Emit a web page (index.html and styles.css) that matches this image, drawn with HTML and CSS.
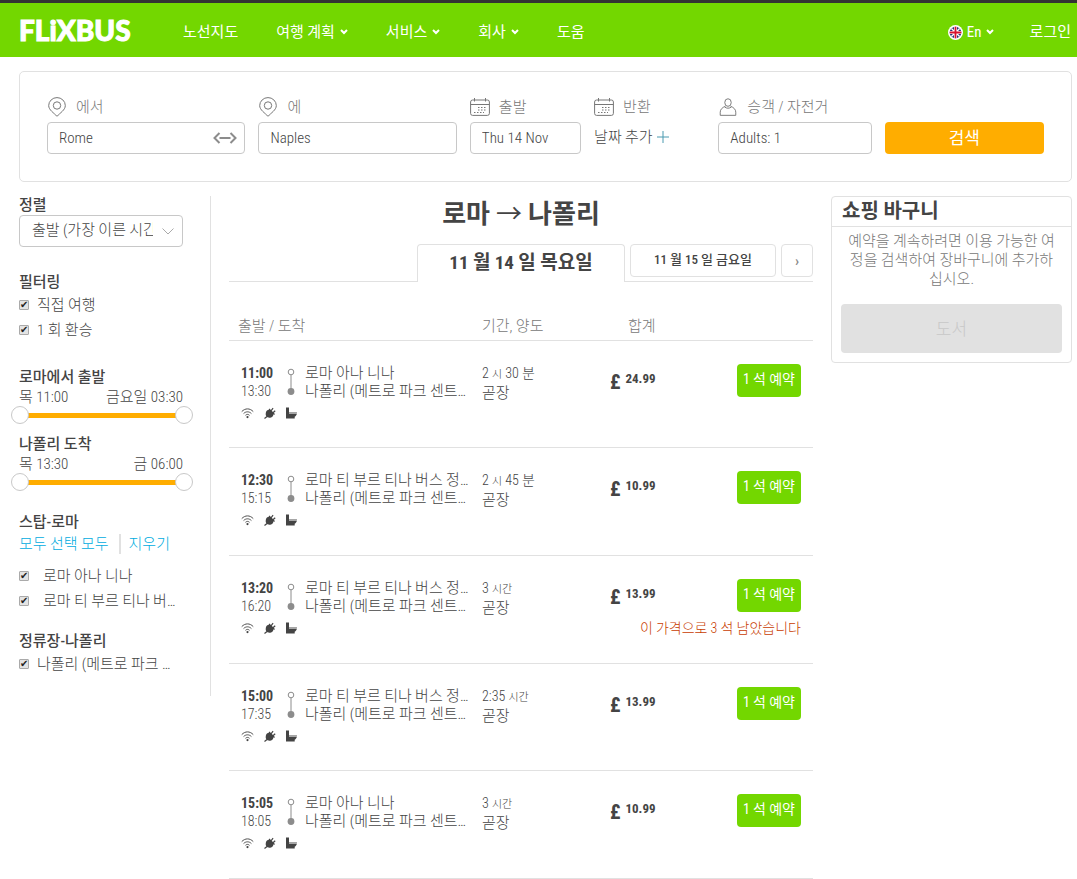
FILE: index.html
```html
<!DOCTYPE html>
<html lang="ko">
<head>
<meta charset="utf-8">
<meta name="viewport" content="width=device-width, initial-scale=1">
<title>FLiXBUS</title>
<link rel="stylesheet" href="styles.css">
</head>
<body>
<svg class="sprite" aria-hidden="true">
  <symbol id="pin" viewBox="0 0 18 20"><path d="M9 19.3C6 16 .7 13 .7 8.6a8.3 8 0 0 1 16.6 0C17.300 13 12 16 9 19.300z"/><circle cx="9" cy="8.500" r="3.700"/></symbol>
  <symbol id="calendar" viewBox="0 0 20 18"><rect x=".6" y="2" width="18.800" height="15.400" rx="2"/><path d="M.6 6.500h18.800M4.500 0v3.500M15.500 0v3.500"/><path d="M8 9.500h9M8 12h9M4 14.500h10" stroke-dasharray="1.500 1.500"/></symbol>
  <symbol id="person" viewBox="0 0 18 19"><ellipse cx="9" cy="4.800" rx="3.400" ry="4"/><path d="M6.300 8.700C3 10 .8 12 .8 15v3.300h16.400V15c0-3-2.200-5-5.500-6.300M5.500 9.500c1.800 1.700 5.200 1.700 7 0"/></symbol>
  <symbol id="caret" viewBox="0 0 8 6"><path d="M1 1l3 3 3-3"/></symbol>
  <symbol id="route" viewBox="0 0 8 28"><path d="M4 7v14" stroke="#8c8c8c"/><circle cx="4" cy="4" r="2.800" fill="#fff" stroke="#8c8c8c"/><circle cx="4" cy="23.500" r="3.400" fill="#8c8c8c"/></symbol>
  <symbol id="wifi" viewBox="0 0 14 12"><path d="M.8 4.500C4.500.6 9.500.6 13.200 4.500M2.800 6.600c2.500-2.500 5.900-2.500 8.400 0M4.800 8.500c1.400-1.300 3-1.300 4.400 0" fill="none" stroke="#444"/><circle cx="7" cy="10.400" r="1.200" fill="#444"/></symbol>
  <symbol id="plug" viewBox="0 0 12 12"><path d="M2.500 5C3 3.500 5 2.500 6.500 3L10 6.500c.3 1.500-1 3.500-2.500 4-2 .5-3.800 0-4.600-1S2 6.500 2.500 5z" fill="#444"/><path d="M5.500 2l5.500 5.500M7.500 3.800L9.600 1.200M9.500 5.800l2.200-2M3.500 9.500L1 11.500" stroke="#444" stroke-width="1.200" fill="none"/></symbol>
  <symbol id="toilet" viewBox="0 0 12 12"><path d="M.5.5h3v5h8c0 2.500-1.300 3.700-2.300 4.200v1.800H.5z" fill="#444"/><path d="M3.500 6.400h8" stroke="#fff" stroke-width=".6"/></symbol>
</svg>

<header class="topbar">
  <a class="logo" href="#">FLiXBUS</a>
  <nav class="nav">
    <a href="#">노선지도</a>
    <a href="#">여행 계획 <svg class="caret"><use href="#caret"/></svg></a>
    <a href="#">서비스 <svg class="caret"><use href="#caret"/></svg></a>
    <a href="#">회사 <svg class="caret"><use href="#caret"/></svg></a>
    <a href="#">도움</a>
  </nav>
  <a class="lang" href="#">
    <svg class="flag" viewBox="0 0 15 15"><circle cx="7.500" cy="7.500" r="7.500" fill="#fff"/><circle cx="7.500" cy="7.500" r="5.800" fill="#29337a"/><path d="M3.400 3.400l8.200 8.200M11.600 3.400l-8.200 8.200" stroke="#fff" stroke-width="1.400"/><path d="M7.500 1.700v11.600M1.700 7.500h11.600" stroke="#fff" stroke-width="3"/><path d="M7.500 1.700v11.600M1.700 7.500h11.600" stroke="#d8102d" stroke-width="1.800"/></svg>
    En <svg class="caret"><use href="#caret"/></svg>
  </a>
  <a class="login" href="#">로그인</a>
</header>

<form class="search">
  <div class="field">
    <label for="from"><svg class="ico pin"><use href="#pin"/></svg>에서</label>
    <div class="box">
      <input id="from" type="text" value="Rome">
      <button class="swap" type="button" aria-label="Swap"><svg viewBox="0 0 24 12"><path d="M6.500 1L1.500 6l5 5M17.500 1l5 5-5 5M6.500 6h11"/></svg></button>
    </div>
  </div>
  <div class="field">
    <label for="to"><svg class="ico pin"><use href="#pin"/></svg>에</label>
    <input id="to" type="text" value="Naples">
  </div>
  <div class="field">
    <label for="depart"><svg class="ico"><use href="#calendar"/></svg>출발</label>
    <input id="depart" type="text" value="Thu 14 Nov">
  </div>
  <div class="field">
    <label for="return"><svg class="ico"><use href="#calendar"/></svg>반환</label>
    <button class="add-date" id="return" type="button">날짜 추가<svg viewBox="0 0 12 12"><path d="M6 0v12M0 6h12"/></svg></button>
  </div>
  <div class="field">
    <label for="pax"><svg class="ico person"><use href="#person"/></svg>승객 / 자전거</label>
    <input id="pax" type="text" value="Adults: 1">
  </div>
  <button class="go" type="submit">검색</button>
</form>

<div class="page">
  <aside class="filters">
    <section>
      <h2><label for="sort">정렬</label></h2>
      <div class="box">
        <select id="sort"><option>출발 (가장 이른 시간)</option></select>
        <svg class="chev" viewBox="0 0 12 7"><path d="M.5.5L6 6l5.500-5.500"/></svg>
      </div>
    </section>
    <section>
      <h2>필터링</h2>
      <label class="check"><input type="checkbox" checked>직접 여행</label>
      <label class="check"><input type="checkbox" checked>1 회 환승</label>
    </section>
    <section>
      <h2>로마에서 출발</h2>
      <div class="ends"><span>목 11:00</span><span>금요일 03:30</span></div>
      <div class="slider"><input type="range" value="0" aria-label="출발 시작"><input type="range" value="100" aria-label="출발 끝"></div>
    </section>
    <section class="near">
      <h2>나폴리 도착</h2>
      <div class="ends"><span>목 13:30</span><span>금 06:00</span></div>
      <div class="slider"><input type="range" value="0" aria-label="도착 시작"><input type="range" value="100" aria-label="도착 끝"></div>
    </section>
    <section>
      <h2>스탑-로마</h2>
      <div class="links"><a href="#">모두 선택 모두</a><a href="#">지우기</a></div>
      <label class="check stop"><input type="checkbox" checked>로마 아나 니나</label>
      <label class="check stop"><input type="checkbox" checked>로마 티 부르 티나 버…</label>
    </section>
    <section class="last">
      <h2>정류장-나폴리</h2>
      <label class="check"><input type="checkbox" checked>나폴리 (메트로 파크 …</label>
    </section>
  </aside>

  <main>
    <h1>로마 <span class="arrow">→</span> 나폴리</h1>
    <div class="tabs">
      <div class="rule"></div>
      <button class="tab active" type="button">11 월 14 일 목요일</button>
      <div class="rule">
        <button class="tab" type="button">11 월 15 일 금요일</button>
        <button class="tab next" type="button" aria-label="Next">›</button>
      </div>
    </div>
    <table class="trips">
      <thead><tr><th class="c-trip">출발 / 도착</th><th class="c-time">기간, 양도</th><th class="c-fare">합계</th></tr></thead>
      <tbody>
        <tr>
          <td><div class="trip"><div class="hours"><b>11:00</b><span>13:30</span></div><svg class="route"><use href="#route"/></svg><div class="stops"><span>로마 아나 니나</span><span>나폴리 (메트로 파크 센트…</span></div></div>
            <div class="perks"><svg><use href="#wifi"/></svg><svg><use href="#plug"/></svg><svg><use href="#toilet"/></svg></div></td>
          <td><div class="time">2 <small>시</small> 30 분</div><div class="direct">곧장</div></td>
          <td><div class="fare"><span class="price"><b class="cur">£</b> <b>24.99</b></span><button type="button">1 석 예약</button></div></td>
        </tr>
        <tr>
          <td><div class="trip"><div class="hours"><b>12:30</b><span>15:15</span></div><svg class="route"><use href="#route"/></svg><div class="stops"><span>로마 티 부르 티나 버스 정…</span><span>나폴리 (메트로 파크 센트…</span></div></div>
            <div class="perks"><svg><use href="#wifi"/></svg><svg><use href="#plug"/></svg><svg><use href="#toilet"/></svg></div></td>
          <td><div class="time">2 <small>시</small> 45 분</div><div class="direct">곧장</div></td>
          <td><div class="fare"><span class="price"><b class="cur">£</b> <b>10.99</b></span><button type="button">1 석 예약</button></div></td>
        </tr>
        <tr>
          <td><div class="trip"><div class="hours"><b>13:20</b><span>16:20</span></div><svg class="route"><use href="#route"/></svg><div class="stops"><span>로마 티 부르 티나 버스 정…</span><span>나폴리 (메트로 파크 센트…</span></div></div>
            <div class="perks"><svg><use href="#wifi"/></svg><svg><use href="#plug"/></svg><svg><use href="#toilet"/></svg></div></td>
          <td><div class="time">3 <small>시간</small></div><div class="direct">곧장</div></td>
          <td><div class="fare"><span class="price"><b class="cur">£</b> <b>13.99</b></span><button type="button">1 석 예약</button></div><p class="note">이 가격으로 3 석 남았습니다</p></td>
        </tr>
        <tr>
          <td><div class="trip"><div class="hours"><b>15:00</b><span>17:35</span></div><svg class="route"><use href="#route"/></svg><div class="stops"><span>로마 티 부르 티나 버스 정…</span><span>나폴리 (메트로 파크 센트…</span></div></div>
            <div class="perks"><svg><use href="#wifi"/></svg><svg><use href="#plug"/></svg><svg><use href="#toilet"/></svg></div></td>
          <td><div class="time">2:35 <small>시간</small></div><div class="direct">곧장</div></td>
          <td><div class="fare"><span class="price"><b class="cur">£</b> <b>13.99</b></span><button type="button">1 석 예약</button></div></td>
        </tr>
        <tr>
          <td><div class="trip"><div class="hours"><b>15:05</b><span>18:05</span></div><svg class="route"><use href="#route"/></svg><div class="stops"><span>로마 아나 니나</span><span>나폴리 (메트로 파크 센트…</span></div></div>
            <div class="perks"><svg><use href="#wifi"/></svg><svg><use href="#plug"/></svg><svg><use href="#toilet"/></svg></div></td>
          <td><div class="time">3 <small>시간</small></div><div class="direct">곧장</div></td>
          <td><div class="fare"><span class="price"><b class="cur">£</b> <b>10.99</b></span><button type="button">1 석 예약</button></div></td>
        </tr>
      </tbody>
    </table>
  </main>

  <aside class="cart">
    <h2>쇼핑 바구니</h2>
    <p>예약을 계속하려면 이용 가능한 여정을 검색하여 장바구니에 추가하십시오.</p>
    <button type="button" disabled>도서</button>
  </aside>
</div>
</body>
</html>
```
FILE: styles.css
```css
* { box-sizing: border-box; }

body {
  margin: 0;
  overflow: hidden;
  background: #fff;
  color: #444;
  font: 300 15px/20px "Roboto Condensed", "Liberation Sans Narrow", "Noto Sans CJK KR", sans-serif;
}

h1, h2, p { margin: 0; }
a { color: inherit; text-decoration: none; }
button, input, select { font: inherit; color: inherit; margin: 0; }
button { border: 0; padding: 0; background: none; }
svg { display: block; flex: none; }
.sprite { position: absolute; width: 0; height: 0; }

.topbar {
  display: flex;
  align-items: center;
  height: 57px;
  padding: 4px 6px 0 19px;
  border-top: 3px solid #333;
  background: #73d700;
  color: #fff;
  font-weight: 400;
}
.logo { width: 164px; padding-bottom: 4px; font: 900 28px/30px Lato, sans-serif; -webkit-text-stroke: 1px #fff; }
.nav { display: flex; gap: 38px; flex: 1; }
.nav a, .lang { display: flex; align-items: center; gap: 5px; white-space: nowrap; }
.lang { gap: 4px; }
.caret { width: 8px; height: 6px; fill: none; stroke: #fff; stroke-width: 2; }
.flag { width: 15px; height: 15px; }
.login { margin-left: 36px; white-space: nowrap; }

.search {
  display: grid;
  grid-template-columns: 198fr 198fr 111fr 111fr 153fr 159fr;
  column-gap: 13px;
  align-items: end;
  margin: 14px 5px 0 19px;
  padding: 24px 27px 27px;
  border: 1px solid #e1e1e1;
  border-radius: 5px;
}
.field { min-width: 0; }
.field label { display: flex; align-items: center; gap: 9px; height: 22px; margin-bottom: 4px; color: #777; white-space: nowrap; }
.ico { width: 20px; height: 18px; fill: none; stroke: #777; }
.ico.pin, .ico.person { height: 20px; }
.ico.person { height: 18px; }
.field input {
  display: block;
  width: 100%;
  height: 32px;
  padding: 0 11px;
  border: 1px solid #c8c8c8;
  border-radius: 4px;
  background: #fff;
}
.box { position: relative; }
.swap { position: absolute; right: 8px; top: 10px; }
.swap svg { width: 24px; height: 12px; fill: none; stroke: #8c8c8c; stroke-width: 2; }
.add-date { display: flex; align-items: center; gap: 4px; height: 32px; padding-bottom: 3px; white-space: nowrap; }
.add-date svg { width: 12px; height: 12px; stroke: #4a9ab0; }
.go { height: 32px; border-radius: 4px; background: #ffad00; color: #fff; font-size: 17px; font-weight: 400; }

.page {
  display: grid;
  grid-template-columns: 192px minmax(0, 1fr) 241px;
  column-gap: 18px;
  align-items: start;
  margin: 14px 5px 0 19px;
}

.filters { padding: 0 27px 20px 0; border-right: 1px solid #e1e1e1; }
.filters section { margin-bottom: 26px; white-space: nowrap; }
.filters h2 { font-size: 15px; line-height: 19px; font-weight: 500; }
.filters .near { margin: -15px 0 22px; }
.filters .last { margin: -7px 0 0; }
.filters select {
  display: block;
  width: 100%;
  height: 32px;
  padding: 0 29px 3px 12px;
  border: 1px solid #c8c8c8;
  border-radius: 4px;
  background: #fff;
  appearance: none;
}
.chev { position: absolute; right: 9px; top: 13px; width: 12px; height: 7px; fill: none; stroke: #aaa; }
.check { display: flex; align-items: center; gap: 8px; height: 25px; }
.check.stop { gap: 14px; }
.links + .check { margin-top: 9px; }
.check input {
  display: grid;
  place-items: center;
  flex: none;
  width: 10px;
  height: 10px;
  border: 1px solid #aaa;
  border-radius: 1px;
  background: #e4e4e4;
  appearance: none;
}
.check input:checked::after { content: "✔"; font: 10px/8px "DejaVu Sans", sans-serif; color: #222; }
.ends { display: flex; justify-content: space-between; padding-top: 1px; line-height: 18px; }
.slider {
  position: relative;
  height: 18px;
  margin: 0 -10px 0 -8px;
  background: linear-gradient(#ffad00, #ffad00) center / calc(100% - 18px) 5px no-repeat;
}
.slider input { position: absolute; inset: 0; width: 100%; height: 18px; background: none; appearance: none; pointer-events: none; }
.slider input::-webkit-slider-thumb {
  width: 18px;
  height: 18px;
  border: 1px solid #c8c8c8;
  border-radius: 50%;
  background: #fff;
  appearance: none;
  pointer-events: auto;
}
.links { display: flex; padding-top: 2px; color: #00ace0; }
.links a + a { margin-left: 10px; padding-left: 8px; border-left: 2px solid #e1e1e1; }

h1 { height: 48px; padding-top: 1px; text-align: center; font-size: 26px; line-height: 34px; font-weight: 700; }
.arrow { font-weight: 400; }
.tabs { display: grid; grid-template-columns: 1fr 208px 1fr; height: 38px; }
.rule { display: flex; gap: 5px; padding-left: 5px; border-bottom: 1px solid #e1e1e1; }
.tab { flex: 1; height: 33px; padding-bottom: 2px; border: 1px solid #e1e1e1; border-radius: 4px; font-size: 13px; font-weight: 500; white-space: nowrap; }
.tab.active { height: 38px; border-bottom: 0; border-radius: 4px 4px 0 0; font-size: 19px; font-weight: 700; }
.tab.next { flex: 0 0 32px; padding: 0; color: #888; font-size: 15px; }

.trips { width: 100%; border-collapse: collapse; table-layout: fixed; }
.trips th { padding: 34px 0 4px; border-bottom: 1px solid #e1e1e1; color: #777; font-weight: 300; text-align: left; }
.trips .c-trip { width: 253px; padding-left: 9px; }
.trips .c-time { width: 128px; }
.trips .c-fare { padding-left: 18px; }
.trips td { height: 108px; padding: 23px 0 0; border-bottom: 1px solid #e1e1e1; vertical-align: top; line-height: 18px; white-space: nowrap; }
.trips tr:nth-child(3n + 1) td { height: 107px; }
.trip { display: grid; grid-template-columns: 46px 8px 1fr; padding-left: 12px; }
.trip b, .trip span { display: block; height: 18px; }
.hours, .time { font-size: 14px; }
.route { width: 8px; height: 28px; margin-top: 4px; }
.stops { padding-left: 10px; }
.perks { display: flex; gap: 9px; padding: 7px 0 0 12px; }
.perks svg { width: 13px; height: 12px; }
.trips small { font-size: 11px; }
.fare { display: flex; justify-content: space-between; padding-right: 12px; }
.price { display: flex; gap: 5px; padding-top: 6px; font-size: 13px; }
.cur { padding-top: 3px; font-size: 20px; }
.trips b { font-weight: 700; }
.fare button { width: 64px; height: 33px; padding-bottom: 3px; border-radius: 4px; background: #73d700; color: #fff; font-size: 14px; font-weight: 400; }
.note { margin: 6px 12px 0 0; color: #c83c00; font-size: 14px; line-height: 20px; text-align: right; }

.cart { border: 1px solid #e1e1e1; border-radius: 4px; padding-bottom: 9px; }
.cart h2 { padding: 0 10px; border-bottom: 1px solid #e1e1e1; font-size: 20px; line-height: 29px; font-weight: 700; }
.cart p { padding: 5px 12px 0; color: #777; line-height: 19px; text-align: center; word-break: break-all; }
.cart button { display: block; width: calc(100% - 18px); height: 49px; margin: 15px 9px 0; border-radius: 4px; background: #e1e1e1; color: #c8c8c8; font-size: 17px; }
```
